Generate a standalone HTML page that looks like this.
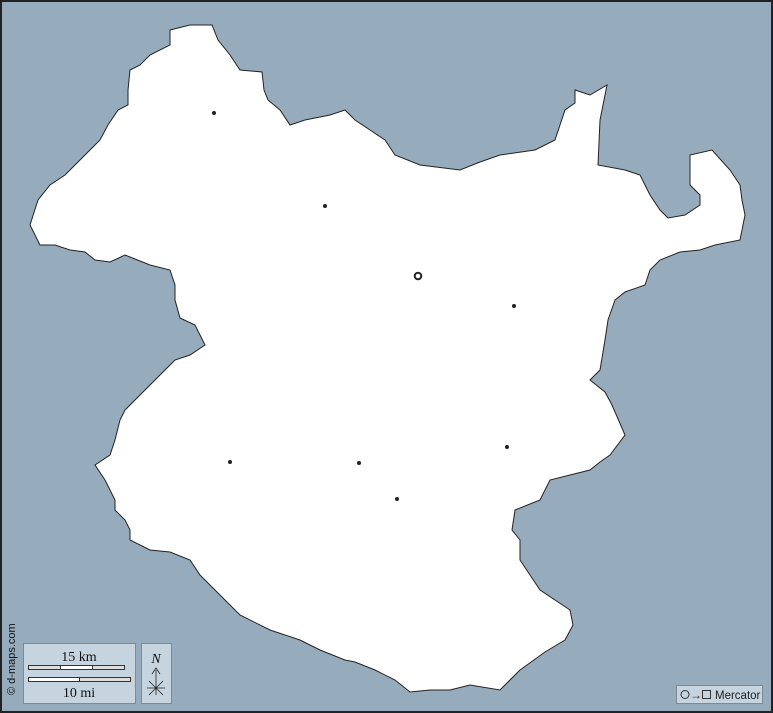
<!DOCTYPE html>
<html><head><style>
html,body{margin:0;padding:0;width:773px;height:713px;overflow:hidden;background:#96acbc}
svg{display:block}
</style></head><body>
<svg width="773" height="713" viewBox="0 0 773 713" xmlns="http://www.w3.org/2000/svg">
<rect x="0" y="0" width="773" height="713" fill="#96acbc"/>
<path d="M170,30 L190,25 L212,25 L218,40 L230,55 L240,70 L262,72 L264,90 L268,100 L280,110 L290,125 L305,120 L330,115 L345,110 L355,120 L370,130 L385,140 L395,155 L420,165 L460,170 L480,162 L500,155 L535,150 L555,140 L560,125 L565,110 L575,103 L575,90 L590,95 L607,85 L600,120 L598,165 L625,170 L640,175 L650,195 L660,210 L668,218 L685,215 L700,205 L700,195 L690,185 L690,155 L712,150 L730,170 L740,185 L742,200 L745,215 L740,240 L715,245 L700,250 L680,252 L660,260 L650,270 L645,285 L625,292 L615,300 L608,320 L605,340 L600,370 L590,380 L605,392 L612,405 L625,435 L610,455 L600,462 L590,470 L570,475 L550,480 L545,490 L540,500 L515,510 L512,530 L520,540 L520,560 L530,575 L540,590 L555,600 L570,610 L573,625 L565,640 L545,652 L520,670 L500,690 L470,685 L450,690 L430,690 L410,692 L395,680 L375,670 L355,662 L345,660 L320,650 L300,640 L270,630 L240,615 L225,600 L215,590 L200,575 L190,560 L170,552 L150,550 L130,540 L130,530 L125,520 L115,510 L115,500 L105,480 L95,465 L110,455 L115,440 L120,420 L125,410 L140,395 L150,385 L165,370 L175,360 L190,355 L205,345 L200,335 L195,325 L180,318 L175,300 L175,285 L170,270 L150,265 L125,255 L110,262 L95,260 L85,252 L70,250 L55,245 L40,245 L30,225 L38,200 L50,185 L65,175 L80,160 L90,150 L100,140 L108,125 L118,110 L128,105 L128,90 L130,70 L140,65 L150,55 L170,45 Z" fill="#ffffff" stroke="#222" stroke-width="1"/>
<g fill="#222">
<circle cx="214" cy="113" r="2"/><circle cx="325" cy="206" r="2"/><circle cx="514" cy="306" r="2"/>
<circle cx="230" cy="462" r="2"/><circle cx="359" cy="463" r="2"/><circle cx="397" cy="499" r="2"/><circle cx="507" cy="447" r="2"/>
</g>
<circle cx="418" cy="276" r="3.3" fill="#fff" stroke="#222" stroke-width="2"/>
<rect x="23.5" y="643.5" width="112" height="60" fill="#c5d4de" stroke="#7a8a96"/>
<text x="79" y="661" font-family="Liberation Serif" font-size="14" text-anchor="middle" fill="#111">15 km</text>
<rect x="28.5" y="665.5" width="96" height="4" fill="#ddd" stroke="#333" stroke-width="1"/>
<rect x="60.5" y="665.5" width="32" height="4" fill="#fff" stroke="#333" stroke-width="1"/>
<rect x="28.5" y="677.5" width="102" height="4" fill="#ddd" stroke="#333" stroke-width="1"/>
<rect x="28.5" y="677.5" width="51" height="4" fill="#fff" stroke="#333" stroke-width="1"/>
<text x="79" y="697" font-family="Liberation Serif" font-size="14" text-anchor="middle" fill="#111">10 mi</text>
<rect x="141.5" y="643.5" width="30" height="60" fill="#c5d4de" stroke="#7a8a96"/>
<text x="156" y="663" font-family="Liberation Serif" font-size="14" font-style="italic" text-anchor="middle" fill="#111">N</text>
<path d="M156,670 V695 M152,674 L156,668 L160,674 M147,688 H165 M149,681 L163,695 M163,681 L149,695" stroke="#222" stroke-width="0.8" fill="none"/>
<text x="15" y="695" font-family="Liberation Sans" font-size="11" fill="#111" transform="rotate(-90 15 695)">© d-maps.com</text>
<rect x="676.5" y="685.5" width="86" height="18" fill="#c5d4de" stroke="#7a8a96"/>
<circle cx="685" cy="694.5" r="4" fill="none" stroke="#333"/>
<text x="690" y="699" font-family="Liberation Sans" font-size="12" fill="#222">→</text>
<rect x="702.5" y="690.5" width="8" height="8" fill="none" stroke="#333"/>
<text x="715" y="699" font-family="Liberation Sans" font-size="11.5" fill="#222">Mercator</text>
<rect x="1" y="1" width="771" height="711" fill="none" stroke="#222" stroke-width="2"/>
</svg>
</body></html>
